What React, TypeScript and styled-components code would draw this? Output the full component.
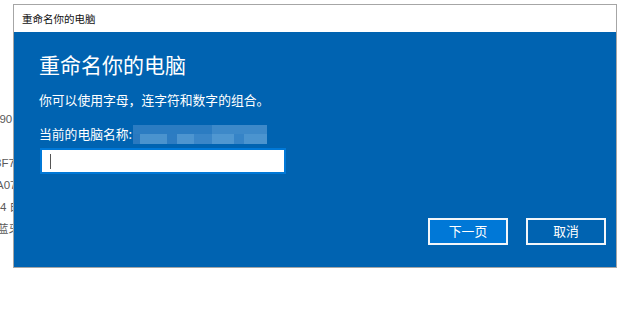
import React from "react";
import styled, { createGlobalStyle } from "styled-components";

const Global = createGlobalStyle`
  html, body { margin: 0; padding: 0; background: #ffffff; }
  body { width: 620px; height: 309px; overflow: hidden; font-family: "Noto Sans CJK SC", "Noto Sans", sans-serif; }
`;

const Page = styled.div`
  display: flex;
  align-items: flex-start;
  width: 620px;
  height: 309px;
`;

const BgColumn = styled.div`
  width: 13px;
  flex: none;
  overflow: hidden;
  padding-top: 108px;
  display: flex;
  flex-direction: column;
`;

const BgLine = styled.div<{ $shift: number }>`
  height: 22px;
  line-height: 22px;
  white-space: nowrap;
  margin-left: ${(p) => p.$shift}px;
  font-family: "Liberation Sans", "Noto Sans CJK SC", sans-serif;
  font-size: 11.5px;
  color: #5a5a5a;
`;

const Dialog = styled.div`
  margin-top: 4px;
  width: 604px;
  height: 264px;
  box-sizing: border-box;
  border: 1px solid #a6a6a6;
  display: flex;
  flex-direction: column;
  flex: none;
`;

const TitleBar = styled.div`
  height: 27px;
  flex: none;
  background: #ffffff;
  display: flex;
  align-items: center;
  padding-left: 8px;
  font-size: 10.5px;
  color: #111;
`;

const Body = styled.div`
  flex: 1;
  background: #0063b1;
  display: flex;
  flex-direction: column;
  padding: 18px 10px 22px 25px;
  color: #ffffff;
`;

const Heading = styled.div`
  font-size: 21px;
  line-height: 28px;
  height: 28px;
  white-space: nowrap;
`;

const Text = styled.div<{ $top: number }>`
  font-size: 12.8px;
  line-height: 18px;
  height: 18px;
  margin-top: ${(p) => p.$top}px;
  white-space: nowrap;
  display: flex;
  align-items: center;
`;

const Mosaic = styled.svg`
  display: block;
  margin-left: 1px;
`;

const Input = styled.div`
  margin-top: 5px;
  margin-left: 1px;
  width: 246px;
  height: 26px;
  box-sizing: border-box;
  background: #ffffff;
  border: 2px solid #0078d7;
  display: flex;
  align-items: center;
  padding-left: 8px;
`;

const Caret = styled.span`
  width: 1px;
  height: 15px;
  background: #555555;
`;

const Actions = styled.div`
  margin-top: auto;
  display: flex;
  justify-content: flex-end;
  gap: 18px;
`;

const Button = styled.button<{ $primary?: boolean }>`
  width: 80px;
  height: 27px;
  box-sizing: border-box;
  border: 2px solid #f2f6fa;
  background: ${(p) => (p.$primary ? "#0078d7" : "#0063b1")};
  color: #ffffff;
  font-family: "Noto Sans CJK SC", sans-serif;
  font-size: 12.8px;
  line-height: 1;
  padding: 0;
  display: flex;
  align-items: center;
  justify-content: center;
`;

const blocks: [number, number, number, number, string][] = [
  [0, 0, 79, 9, "#2b7cc2"],
  [79, 0, 55, 9, "#3d89c9"],
  [0, 9, 7, 10, "#2a79c0"],
  [7, 9, 27, 10, "#4a93ce"],
  [34, 9, 10, 10, "#2d7cc2"],
  [44, 9, 17, 10, "#4d95d0"],
  [61, 9, 18, 10, "#3a86c8"],
  [79, 9, 22, 10, "#4f97d1"],
  [101, 9, 10, 10, "#3684c7"],
  [111, 9, 23, 10, "#4b94cf"],
];

export default function App() {
  return (
    <>
      <Global />
      <Page>
        <BgColumn>
          <BgLine $shift={-7}>390</BgLine>
          <BgLine $shift={0}>&nbsp;</BgLine>
          <BgLine $shift={-5}>3F7</BgLine>
          <BgLine $shift={-4}>A07</BgLine>
          <BgLine $shift={0}>4 白</BgLine>
          <BgLine $shift={-3}>蓝牙</BgLine>
        </BgColumn>
        <Dialog>
          <TitleBar>重命名你的电脑</TitleBar>
          <Body>
            <Heading>重命名你的电脑</Heading>
            <Text $top={13}>你可以使用字母，连字符和数字的组合。</Text>
            <Text $top={16}>
              当前的电脑名称:
              <Mosaic width="134" height="19" viewBox="0 0 134 19">
                {blocks.map(([x, y, w, h, c], i) => (
                  <rect key={i} x={x} y={y} width={w} height={h} fill={c} />
                ))}
              </Mosaic>
            </Text>
            <Input>
              <Caret />
            </Input>
            <Actions>
              <Button $primary>下一页</Button>
              <Button>取消</Button>
            </Actions>
          </Body>
        </Dialog>
      </Page>
    </>
  );
}
